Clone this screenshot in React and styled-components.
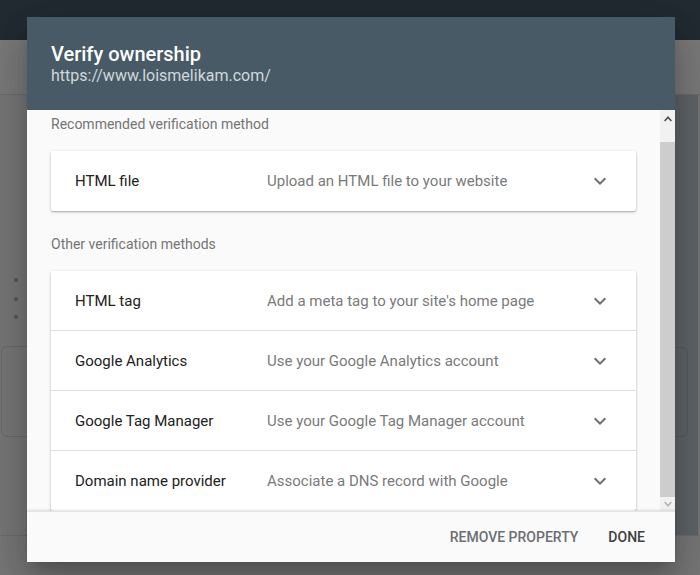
import React from "react";
import styled, { createGlobalStyle } from "styled-components";

const GlobalStyle = createGlobalStyle`
  html, body {
    margin: 0;
    padding: 0;
    font-family: Roboto, "Liberation Sans", Arial, sans-serif;
    -webkit-font-smoothing: antialiased;
  }
  * { box-sizing: border-box; }
`;

const methods = [
  { title: "HTML tag", desc: "Add a meta tag to your site's home page" },
  { title: "Google Analytics", desc: "Use your Google Analytics account" },
  { title: "Google Tag Manager", desc: "Use your Google Tag Manager account" },
  { title: "Domain name provider", desc: "Associate a DNS record with Google" },
];

const Page = styled.div`
  position: relative;
  width: 700px;
  height: 575px;
  overflow: hidden;
  display: flex;
  flex-direction: column;
  background: #777777;
`;
const TopBar = styled.div`
  height: 40px;
  background: #212b31;
`;
const SubBar = styled.div`
  height: 55px;
  background: #7a7a7a;
  border-bottom: 1px solid #6c6c6c;
`;
const Body = styled.div`
  height: 441px;
  display: flex;
  border-bottom: 1px solid #6c6c6c;
`;
const LeftCol = styled.div`
  flex: 1;
  padding-top: 183px;
`;
const Bullets = styled.ul`
  margin: 0;
  padding: 0 0 0 14px;
  list-style: none;
  display: flex;
  flex-direction: column;
  gap: 14.5px;
`;
const Dot = styled.li`
  width: 4px;
  height: 4px;
  border-radius: 50%;
  background: #4a5763;
`;
const GhostCard = styled.div`
  margin-top: 27px;
  margin-left: 1px;
  width: 200px;
  height: 91px;
  border: 1px solid #6a6a6a;
  border-radius: 6px;
`;
const SidePanel = styled.div`
  width: 23px;
  margin-right: 2px;
  background: #5f6468;
  padding-top: 252px;
`;
const SideCard = styled.div`
  width: 13px;
  height: 90px;
  border: 1px solid #565b5f;
  border-left: none;
  border-radius: 0 6px 6px 0;
`;

const Dialog = styled.div`
  position: absolute;
  left: 27px;
  top: 17px;
  width: 648px;
  height: 545px;
  display: flex;
  flex-direction: column;
  background: #fafafa;
  box-shadow: 0 11px 15px -7px rgba(0, 0, 0, 0.2),
    0 24px 38px 3px rgba(0, 0, 0, 0.14), 0 9px 46px 8px rgba(0, 0, 0, 0.12);
`;
const Header = styled.div`
  height: 93px;
  background: #475a65;
  padding: 25px 24px 0;
`;
const Title = styled.div`
  font-size: 20px;
  line-height: 24px;
  font-weight: 500;
  color: #ffffff;
`;
const Url = styled.div`
  font-size: 16px;
  line-height: 20px;
  color: #d0d8dc;
`;
const ScrollArea = styled.div`
  flex: 1;
  display: flex;
  min-height: 0;
`;
const Content = styled.div`
  flex: 1;
  overflow: hidden;
  padding: 4px 24px 0;
`;
const SectionLabel = styled.div`
  font-size: 14px;
  line-height: 20px;
  color: #757575;
  margin-top: ${(p) => p.$top || 0}px;
  margin-bottom: 17px;
`;
const Card = styled.div`
  background: #ffffff;
  border-radius: 2px;
  box-shadow: 0 1px 3px rgba(0, 0, 0, 0.25), 0 1px 1px rgba(0, 0, 0, 0.12);
`;
const Row = styled.div`
  height: 60px;
  display: flex;
  align-items: center;
  padding: 0 24px;
  border-bottom: ${(p) => (p.$last ? "none" : "1px solid #dcdcdc")};
`;
const RowTitle = styled.div`
  width: 192px;
  font-size: 15px;
  color: #212121;
`;
const RowDesc = styled.div`
  flex: 1;
  font-size: 15px;
  color: #7a7a7a;
`;
const Chevron = styled.svg`
  width: 24px;
  height: 24px;
  fill: #6f6f6f;
`;

const Scrollbar = styled.div`
  width: 15px;
  display: flex;
  flex-direction: column;
  background: #f1f1f1;
`;
const ScrollArrow = styled.div`
  height: ${(p) => p.$h}px;
  display: flex;
  align-items: center;
  justify-content: center;
  svg {
    width: 8px;
    height: 6px;
    fill: ${(p) => p.$color};
  }
`;
const ScrollGap = styled.div`
  height: 15px;
`;
const Thumb = styled.div`
  flex: 1;
  background: #cdcdcd;
`;

const Footer = styled.div`
  height: 51px;
  display: flex;
  align-items: center;
  justify-content: flex-end;
  gap: 14px;
  padding-right: 22px;
  background: #fafafa;
  box-shadow: 0 -1px 2px rgba(0, 0, 0, 0.12);
  position: relative;
  border-top: 1px solid #e4e4e4;
`;
const TextButton = styled.button`
  border: none;
  background: transparent;
  padding: 0 8px;
  font-family: Roboto, "Liberation Sans", Arial, sans-serif;
  font-size: 14px;
  font-weight: 500;
  letter-spacing: 0;
  text-transform: uppercase;
  color: ${(p) => (p.$strong ? "#3c4043" : "#6b6f72")};
  cursor: pointer;
`;

const ExpandIcon = () => (
  <Chevron viewBox="0 0 24 24">
    <path d="M16.59 8.59L12 13.17 7.41 8.59 6 10l6 6 6-6z" />
  </Chevron>
);

const MethodRow = ({ title, desc, last }) => (
  <Row $last={last}>
    <RowTitle>{title}</RowTitle>
    <RowDesc>{desc}</RowDesc>
    <ExpandIcon />
  </Row>
);

export default function App() {
  return (
    <>
      <GlobalStyle />
      <Page>
        <TopBar />
        <SubBar />
        <Body>
          <LeftCol>
            <Bullets>
              <Dot />
              <Dot />
              <Dot />
            </Bullets>
            <GhostCard />
          </LeftCol>
          <SidePanel>
            <SideCard />
          </SidePanel>
        </Body>

        <Dialog>
          <Header>
            <Title>Verify ownership</Title>
            <Url>https://www.loismelikam.com/</Url>
          </Header>
          <ScrollArea>
            <Content>
              <SectionLabel>Recommended verification method</SectionLabel>
              <Card>
                <MethodRow
                  title="HTML file"
                  desc="Upload an HTML file to your website"
                  last
                />
              </Card>
              <SectionLabel $top={23}>Other verification methods</SectionLabel>
              <Card>
                {methods.map((m, i) => (
                  <MethodRow
                    key={m.title}
                    title={m.title}
                    desc={m.desc}
                    last={i === methods.length - 1}
                  />
                ))}
              </Card>
            </Content>
            <Scrollbar>
              <ScrollArrow $h={17} $color="#505050">
                <svg viewBox="0 0 8 6">
                  <path d="M4 0L8 4.5 6.8 5.6 4 2.4 1.2 5.6 0 4.5z" />
                </svg>
              </ScrollArrow>
              <ScrollGap />
              <Thumb />
              <ScrollArrow $h={14} $color="#b5b5b5">
                <svg viewBox="0 0 8 6">
                  <path d="M4 6L0 1.5 1.2 0.4 4 3.6 6.8 0.4 8 1.5z" />
                </svg>
              </ScrollArrow>
            </Scrollbar>
          </ScrollArea>
          <Footer>
            <TextButton>Remove property</TextButton>
            <TextButton $strong>Done</TextButton>
          </Footer>
        </Dialog>
      </Page>
    </>
  );
}
